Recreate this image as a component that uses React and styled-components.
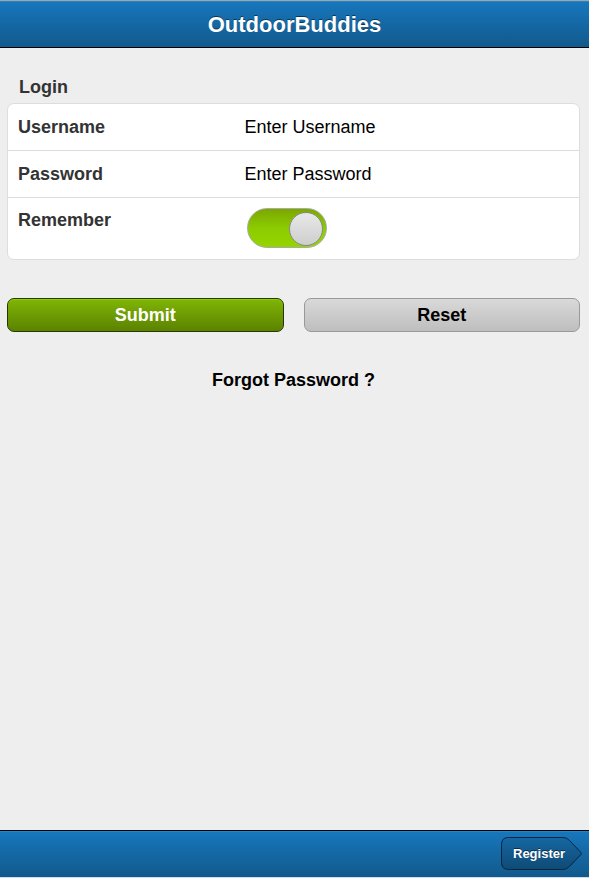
import React from "react";
import styled, { createGlobalStyle } from "styled-components";

const GlobalStyle = createGlobalStyle`
  *, *::before, *::after { box-sizing: border-box; }
  body {
    margin: 0;
    background: #eeeeee;
    font-family: "Liberation Sans", Arial, Helvetica, sans-serif;
    font-size: 18px;
    line-height: 24px;
    color: #000;
  }
  button, input { font: inherit; }
`;

const Page = styled.div`
  display: flex;
  flex-direction: column;
  min-height: 100vh;
`;

const TitleBar = styled.header`
  display: flex;
  align-items: center;
  justify-content: center;
  height: 48px;
  padding-top: 2px;
  border-top: 1px solid #a5a5a5;
  border-bottom: 1px solid #000;
  background: linear-gradient(#1777bd, #12598c);
  box-shadow: inset 0 1px 0 #1e84cc;
`;

const Title = styled.h1`
  margin: 0;
  font-size: 22px;
  line-height: 24px;
  color: #fff;
  text-shadow: 0 -1px 0 rgba(0, 0, 0, 0.5);
`;

const Main = styled.main`
  flex: 1;
  padding: 27px 9px 0 7px;
`;

const FieldSet = styled.fieldset`
  margin: 0;
  padding: 0;
  border: 0;
  min-width: 0;
`;

const Legend = styled.legend`
  padding: 0 12px;
  height: 28px;
  font-weight: bold;
  color: #333;
`;

const Card = styled.div`
  border: 1px solid #dddddd;
  border-radius: 7px;
  background: #fff;
  overflow: hidden;
`;

const FieldRow = styled.div`
  display: grid;
  grid-template-columns: 2fr 3fr;
  border-bottom: 1px solid #dddddd;

  &:last-child { border-bottom: 0; }
`;

const Label = styled.label`
  padding: ${({ $compact }) => ($compact ? "10px" : "11px 10px")};
  font-weight: bold;
  color: #333;
`;

const TextInput = styled.input`
  width: 100%;
  min-width: 0;
  padding: 11px 8px;
  border: 0;
  outline: 0;
  background: transparent;
  line-height: 24px;
  color: #000;

  &::placeholder { color: #000; opacity: 1; }
`;

const Toggle = styled.input`
  appearance: none;
  display: flex;
  align-items: center;
  width: 80px;
  height: 40px;
  margin: 10px 11px 11px;
  padding: 2px 3px 0;
  border: 1px solid #aaaaaa;
  border-radius: 20px;
  background: linear-gradient(#ccc, #eee);
  cursor: pointer;

  &::before {
    content: "";
    width: 34px;
    height: 34px;
    border: 1px solid #8a8a8a;
    border-radius: 50%;
    background: linear-gradient(#e8e8e8, #cecece);
  }

  &:checked {
    justify-content: flex-end;
    background: linear-gradient(#7ba800, #8ccb00 50%, #95d500);
  }
`;

const Actions = styled.div`
  display: grid;
  grid-template-columns: 1fr 1fr;
  gap: 20px;
  margin-top: 38px;
`;

const buttonLooks = {
  confirm: `
    color: #fff;
    border-color: #263800;
    background: linear-gradient(#80b506, #5b8200);
    box-shadow: inset 0 1px 0 #8fce00;
  `,
  plain: `
    color: #000;
    border-color: #999999;
    background: linear-gradient(#d9d9d9, #bebebe);
  `,
};

const ActionButton = styled.button`
  height: 34px;
  padding: 0 8px;
  border: 1px solid;
  border-radius: 7px;
  font-weight: bold;
  line-height: 24px;
  cursor: pointer;
  ${({ $look }) => buttonLooks[$look]}
`;

const Forgot = styled.p`
  margin: 36px 0 0;
  text-align: center;
`;

const ForgotLink = styled.a`
  font-weight: bold;
  color: #000;
  text-decoration: none;
`;

const BottomBar = styled.footer`
  display: flex;
  align-items: center;
  justify-content: flex-end;
  height: 48px;
  padding: 0 6px;
  border-top: 1px solid #000;
  border-bottom: 1px solid #cfdfee;
  background: linear-gradient(#1777bd, #12598c);
  box-shadow: inset 0 1px 0 #1e84cc;
`;

const ForwardLink = styled.a`
  position: relative;
  display: flex;
  align-items: center;
  width: 82px;
  height: 34px;
  padding-left: 12px;
  font-size: 13px;
  font-weight: bold;
  color: #fff;
  text-decoration: none;
  text-shadow: 0 -1px 0 rgba(0, 0, 0, 0.5);
`;

const ArrowShape = styled.svg`
  position: absolute;
  inset: 0;
`;

const LinkText = styled.span`
  position: relative;
`;

export default function App() {
  return (
    <Page>
      <GlobalStyle />
      <TitleBar>
        <Title>OutdoorBuddies</Title>
      </TitleBar>
      <Main>
        <form onSubmit={(event) => event.preventDefault()}>
          <FieldSet>
            <Legend>Login</Legend>
            <Card>
              <FieldRow>
                <Label htmlFor="username">Username</Label>
                <TextInput id="username" type="text" placeholder="Enter Username" />
              </FieldRow>
              <FieldRow>
                <Label htmlFor="password">Password</Label>
                <TextInput id="password" type="password" placeholder="Enter Password" />
              </FieldRow>
              <FieldRow>
                <Label htmlFor="remember" $compact>Remember</Label>
                <Toggle id="remember" type="checkbox" role="switch" defaultChecked />
              </FieldRow>
            </Card>
          </FieldSet>
          <Actions>
            <ActionButton type="submit" $look="confirm">Submit</ActionButton>
            <ActionButton type="reset" $look="plain">Reset</ActionButton>
          </Actions>
        </form>
        <Forgot>
          <ForgotLink href="#forgot">Forgot Password ?</ForgotLink>
        </Forgot>
      </Main>
      <BottomBar>
        <ForwardLink href="#register">
          <ArrowShape width="82" height="34" viewBox="0 0 82 34" aria-hidden="true">
            <defs>
              <linearGradient id="arrow-fill" x1="0" y1="0" x2="0" y2="1">
                <stop offset="0" stopColor="#1567a3" />
                <stop offset="1" stopColor="#0f4a75" />
              </linearGradient>
            </defs>
            <path
              d="M7.500 .5H62Q66 .5 68.500 3.500L80 15.500Q80.500 16.500 80 17.500L68.500 29.500Q65.500 32.500 62 32.500H7.500Q.5 32.500 .5 25.500V7.500Q.5 .5 7.500 .5Z"
              fill="url(#arrow-fill)"
              stroke="#07263d"
            />
          </ArrowShape>
          <LinkText>Register</LinkText>
        </ForwardLink>
      </BottomBar>
    </Page>
  );
}
